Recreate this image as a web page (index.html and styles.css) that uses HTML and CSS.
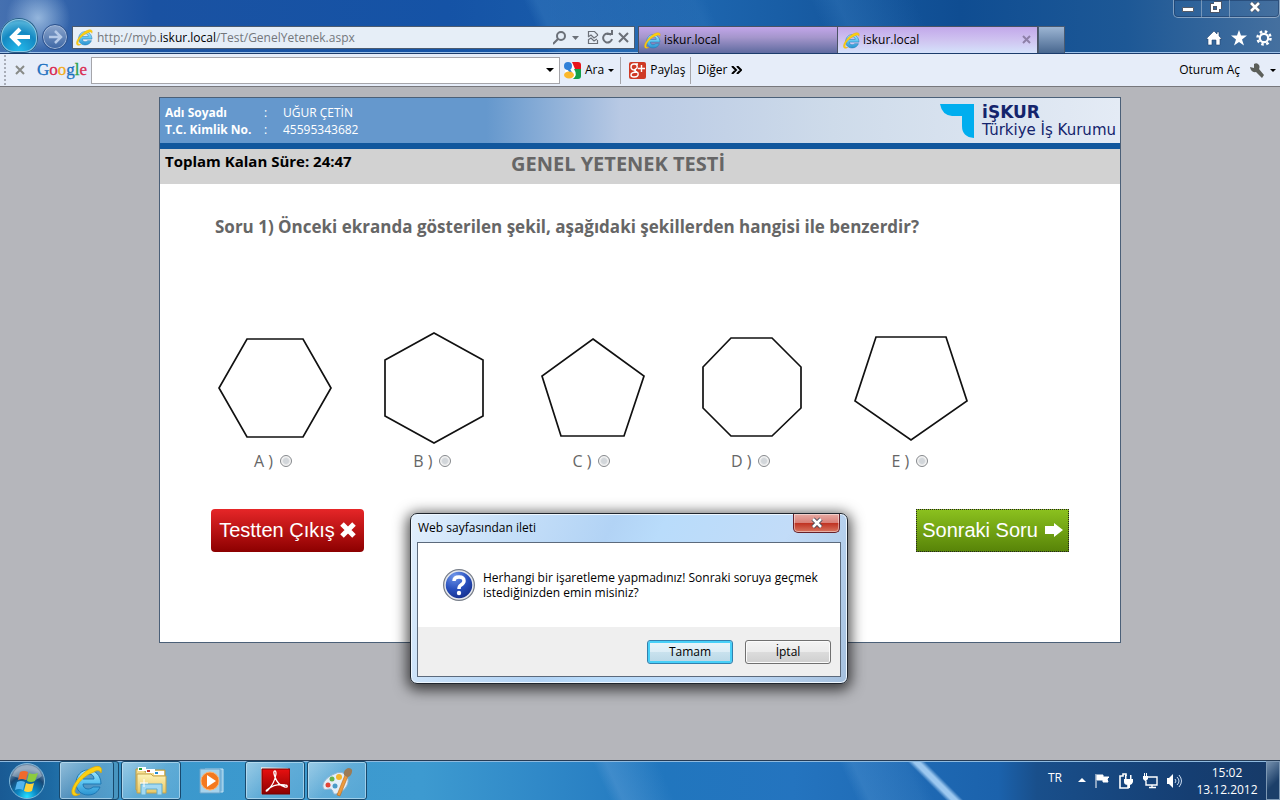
FILE: index.html
```html
<!DOCTYPE html>
<html lang="tr">
<head>
<meta charset="utf-8">
<title>Genel Yetenek Testi</title>
<link rel="stylesheet" href="styles.css">
</head>
<body>
<svg width="0" height="0" class="defs" aria-hidden="true">
  <defs>
    <linearGradient id="ieBlue" x1="0" y1="0" x2="0" y2="1"><stop offset="0" stop-color="#a5e6fc"/><stop offset=".5" stop-color="#5cc3f0"/><stop offset="1" stop-color="#2b93d0"/></linearGradient>
    <linearGradient id="folder" x1="0" y1="0" x2="0" y2="1"><stop offset="0" stop-color="#fdf3b8"/><stop offset="1" stop-color="#e8c865"/></linearGradient>
    <linearGradient id="adobe" x1="0" y1="0" x2="0" y2="1"><stop offset="0" stop-color="#e81010"/><stop offset="1" stop-color="#8c0000"/></linearGradient>
    <radialGradient id="orb" cx=".5" cy=".95" r=".8"><stop offset="0" stop-color="#25e0ff"/><stop offset=".35" stop-color="#0c87c4"/><stop offset=".75" stop-color="#164775"/><stop offset="1" stop-color="#6f8ba8"/></radialGradient>
    <radialGradient id="question" cx=".35" cy=".2" r=".9"><stop offset="0" stop-color="#6f96ea"/><stop offset=".5" stop-color="#2850be"/><stop offset="1" stop-color="#10257f"/></radialGradient>
    <symbol id="ie" viewBox="0 0 32 32">
      <path d="M29 22c-2 5-6 8-12 8C10 30 5 25 5 18S10 5 17 5s13 5 13 14H12c0 3 2 5 5 5 2 0 4-1 5-2zM12 14h11c0-3-2-5-5-5-4 0-6 2-6 5z" fill="url(#ieBlue)" stroke="#1e78b4"/>
      <path d="M9 29C4 32 0 31 1 25 3 17 13 5 23 2c6-2 9 1 7 6-1-3-4-3-7-1C14 10 6 18 4 25c-1 3 2 5 5 4z" fill="#fcd012" stroke="#e0a800" stroke-width=".7"/>
    </symbol>
  </defs>
</svg>

<header class="chrome">
  <div class="window-buttons">
    <button aria-label="Simge durumuna küçült"><svg width="14" height="14" viewBox="0 0 14 14"><path d="M1.500 7.500h11v4h-11z" fill="#fff" stroke="#555b68"/></svg></button>
    <button aria-label="Önceki boyut"><svg width="14" height="14" viewBox="0 0 14 14"><g fill="none" stroke="#4d5668" stroke-width="4"><path d="M5 3h6v6M3 5h6v6H3z"/></g><g fill="none" stroke="#fff" stroke-width="2"><path d="M5 3h6v6M3 5h6v6H3z"/></g></svg></button>
    <button class="wide" aria-label="Kapat"><svg width="14" height="14" viewBox="0 0 14 14"><path d="M3 3l8 8M11 3l-8 8" stroke="#4d5668" stroke-width="4.500"/><path d="M3 3l8 8M11 3l-8 8" stroke="#fff" stroke-width="2.600"/></svg></button>
  </div>
  <nav class="nav">
    <button class="back" aria-label="Geri"><svg width="38" height="35" viewBox="0 0 38 35"><path d="M11 19h19M20 11l-8 8 8 8" fill="none" stroke="#fff" stroke-width="4"/></svg></button>
    <button class="forward" aria-label="İleri"><svg width="24" height="24" viewBox="0 0 24 24"><path d="M6 12h12M12 6l6 6-6 6" fill="none" stroke="#b5cae8" stroke-width="2.500"/></svg></button>
    <div class="address">
      <svg width="17" height="17"><use href="#ie"/></svg>
      <span class="url">http://myb.<b>iskur.local</b>/Test/GenelYetenek.aspx</span>
      <svg width="78" height="18" viewBox="0 0 78 18" fill="none" stroke="#6b7078" stroke-width="2"><circle cx="8" cy="7" r="4"/><path d="M5 10l-5 5"/><path d="M19 7h7l-3.500 4z" fill="#6b7078" stroke="none"/><path d="M35.500 7V2.500h6l3 3V7M35.500 11v3.500h9V11" stroke-width="1.200"/><path d="M35 8l3-2 3 3 3-2M35 11l3-2 3 3 3-2" stroke-width="1.200"/><path d="M58 6a4.500 4.500 0 1 0 1 4M54 5h5V1"/><path d="M66 4l9 9M75 4l-9 9"/></svg>
    </div>
    <div class="tab"><svg width="17" height="17"><use href="#ie"/></svg><span>iskur.local</span></div>
    <div class="tab active"><svg width="17" height="17"><use href="#ie"/></svg><span>iskur.local</span><button aria-label="Sekmeyi kapat"><svg width="10" height="10" viewBox="0 0 10 10"><path d="M1 1l7 7M8 1L1 8" stroke="#8e80a8" stroke-width="2"/></svg></button></div>
    <button class="new-tab" aria-label="Yeni sekme"></button>
    <div class="tools">
      <button aria-label="Giriş"><svg width="16" height="16" viewBox="0 0 16 16"><path d="M8 1L0 9h2v6h4v-5h4v5h4V9h2l-3-3V2h-2v2z" fill="#fff" stroke="#24456f" stroke-width=".6"/></svg></button>
      <button aria-label="Sık kullanılanlar"><svg width="16" height="16" viewBox="0 0 16 16"><path d="M8 0l2 5.500h6l-5 4 2 6L8 12l-5 3.500 2-6-5-4h6z" fill="#fff"/></svg></button>
      <button aria-label="Araçlar"><svg width="16" height="16" viewBox="0 0 16 16"><circle cx="8" cy="8" r="6.500" fill="none" stroke="#fff" stroke-width="2.500" stroke-dasharray="2.550 2.550"/><circle cx="8" cy="8" r="4.200" fill="none" stroke="#fff" stroke-width="2.200"/></svg></button>
    </div>
  </nav>
</header>

<div class="toolbar">
  <i class="grip"></i>
  <button class="bar-close" aria-label="Araç çubuğunu kapat"><svg width="10" height="10" viewBox="0 0 10 10"><path d="M1 1l8 8M9 1L1 9" stroke="#888b88" stroke-width="2"/></svg></button>
  <span class="google"><i class="c1">G</i><i class="c2">o</i><i class="c3">o</i><i class="c1">g</i><i class="c4">l</i><i class="c2">e</i></span>
  <div class="search"><input type="text" aria-label="Google araması"><svg width="8" height="4"><path d="M0 0h8L4 4z"/></svg></div>
  <button class="ara"><svg width="17" height="17" viewBox="0 0 17 17"><rect x="1" y="1" width="15" height="15" fill="#fff"/><path d="M8 0h6q3 0 3 3v4H11z" fill="#e8141c"/><path d="M10 7h7v7q0 3-3 3H9q5-4 1-10z" fill="#12a04a"/><circle cx="4" cy="4" r="4" fill="#2f80d8"/><path d="M3 7l3 4 3 1-3-5z" fill="#2f80d8"/><ellipse cx="5" cy="13" rx="5" ry="3.500" fill="#fbb82c"/></svg><span>Ara</span><svg width="6" height="3"><path d="M0 0h6L3 3z"/></svg></button>
  <button class="share"><svg width="17" height="17" viewBox="0 0 17 17"><rect width="17" height="17" rx="2" fill="#cf3a26"/><path d="M9 2H5Q2 2 2 5t4 3h1M5 2q4 0 3 4L5 8l4 3q1 4-4 4-3 0-3-2 0-3 6-3M12.500 3v7M9 6.500h7" fill="none" stroke="#fff" stroke-width="1.400"/></svg><span>Paylaş</span></button>
  <button class="more"><span>Diğer</span><svg width="11" height="8" viewBox="0 0 11 8"><path d="M1 0l4 4-4 4M6 0l4 4-4 4" fill="none" stroke="#000" stroke-width="2"/></svg></button>
  <button class="login"><span>Oturum Aç</span><svg width="15" height="15" viewBox="0 0 15 15"><path d="M1 4l4 1V1q3-2 5 1 1 2 0 4l5 6-2 3-6-6Q2 10 1 4z" fill="#5c5f5a"/></svg><svg width="6" height="3"><path d="M0 0h6L3 3z"/></svg></button>
</div>

<main class="page">
  <section class="panel">
    <div class="banner">
      <dl class="identity">
        <dt>Adı Soyadı</dt><dd>:</dd><dd>UĞUR ÇETİN</dd>
        <dt>T.C. Kimlik No.</dt><dd>:</dd><dd>45595343682</dd>
      </dl>
      <div class="brand">
        <svg width="34" height="34" viewBox="0 0 34 34"><path d="M0 0h34v34q-12-1-12-12V12H12Q2 11 0 0z" fill="#00aeef"/></svg>
        <div><strong>iŞKUR</strong><span>Türkiye İş Kurumu</span></div>
      </div>
    </div>
    <div class="status"><p>Toplam Kalan Süre: 24:47</p><h1>GENEL YETENEK TESTİ</h1></div>
    <form class="quiz">
      <h2>Soru 1) Önceki ekranda gösterilen şekil, aşağıdaki şekillerden hangisi ile benzerdir?</h2>
      <div class="options">
        <label><svg width="120" height="120"><path d="M32 9h56l28 49-28 49H32L4 58z"/></svg><span>A ) <input type="radio" name="answer"></span></label>
        <label><svg width="120" height="120"><path d="M60 3l49 27v56l-49 27-49-27V30z"/></svg><span>B ) <input type="radio" name="answer"></span></label>
        <label><svg width="120" height="120"><path d="M60 9l51 37-20 60H28L9 46z"/></svg><span>C ) <input type="radio" name="answer"></span></label>
        <label><svg width="120" height="120"><path d="M39 8h41l29 29v41l-29 28H39L11 78V37z"/></svg><span>D ) <input type="radio" name="answer"></span></label>
        <label><svg width="120" height="120"><path d="M25 7h70l21 64-56 39L4 71z"/></svg><span>E ) <input type="radio" name="answer"></span></label>
      </div>
      <div class="actions">
        <button type="button" class="exit"><span>Testten Çıkış</span><svg width="16" height="16" viewBox="0 0 16 16"><path d="M2 2l12 12M14 2L2 14" stroke="#fff" stroke-width="5"/></svg></button>
        <button type="button" class="next"><span>Sonraki Soru</span><svg width="18" height="14" viewBox="0 0 18 14"><path d="M0 3h9V0l9 7-9 7v-3H0z" fill="#fff"/></svg></button>
      </div>
    </form>
  </section>
</main>

<div class="dialog" role="dialog" aria-labelledby="dialog-title">
  <div class="dialog-bar"><span id="dialog-title">Web sayfasından ileti</span>
    <button class="dialog-close" aria-label="Kapat"><svg width="14" height="12" viewBox="0 0 14 12"><path d="M3 2l8 8M11 2l-8 8" stroke="#4a4a58" stroke-width="4.500"/><path d="M3 2l8 8M11 2l-8 8" stroke="#fff" stroke-width="2.500"/></svg></button></div>
  <div class="dialog-body">
    <div class="message">
      <svg width="32" height="32" viewBox="0 0 32 32"><circle cx="16" cy="16" r="15" fill="url(#question)" stroke="#777d88" stroke-width="2"/><circle cx="16" cy="16" r="14" fill="none" stroke="#e5e8ee" stroke-width="1.500"/><path d="M11 12q0-4 5-4t5 4q0 2-3 4-2 1-2 4" fill="none" stroke="#fff" stroke-width="3.500"/><circle cx="16" cy="24" r="2.200" fill="#fff"/></svg>
      <p>Herhangi bir işaretleme yapmadınız! Sonraki soruya geçmek istediğinizden emin misiniz?</p>
    </div>
    <div class="dialog-actions"><button class="default">Tamam</button><button>İptal</button></div>
  </div>
</div>

<footer class="taskbar">
  <button class="start" aria-label="Başlat"><svg width="38" height="38" viewBox="0 0 38 38"><circle cx="19" cy="19" r="17.500" fill="url(#orb)" stroke="#7fb8da"/><path d="M4 14Q8 3 19 3t15 11q-7 6-15 4T4 14z" fill="#fff" opacity=".3"/><path d="M12 10q4-2 8 0l-2 8q-4-2-8 0z" fill="#ef6a2c"/><path d="M21 11q4 2 9 0l-3 8q-4 2-8 0z" fill="#8ccb3f"/><path d="M9 20q4-2 8 0l-2 8q-4-2-8 0z" fill="#54b4ee"/><path d="M18 21q4 2 8 0l-2 8q-4 2-8 0z" fill="#ffd23a"/></svg></button>
  <button class="task stacked" aria-label="Internet Explorer"><svg width="32" height="32"><use href="#ie"/></svg></button>
  <button class="task" aria-label="Windows Gezgini"><svg width="34" height="32" viewBox="0 0 34 32"><path d="M2 4h9v3h7V5h13v20H2z" fill="#f3dc8c" stroke="#b99843"/><path d="M4 2h8v4H4zM12 4h9v4h-9zM20 6h10v4H20z" fill="#fff"/><path d="M5 3h3v2H5z" fill="#1f9d33"/><path d="M13 5h3v2h-3z" fill="#bf3327"/><path d="M21 7h3v2h-3z" fill="#238ed4"/><path d="M3 9h14l2 2h13v17H3z" fill="url(#folder)" stroke="#c4a34c"/><path d="M7 30V19h21v11h-5v-6H12v6z" fill="#a3d9f2" stroke="#5cabd0"/><path d="M10 14v8M6 18h8" stroke="#fff"/></svg></button>
  <button class="task idle" aria-label="Windows Media Player"><svg width="30" height="28" viewBox="0 0 30 28"><path d="M7 2h18v23H7z" fill="#7fbbe0" stroke="#c3e2f3"/><path d="M2 2h20v24H2z" fill="#a7d3ec" stroke="#6ba4ca"/><circle cx="12" cy="14" r="9" fill="#f4791f" stroke="#ffb26b"/><path d="M9 8l9 6-9 6z" fill="#fff"/></svg></button>
  <button class="task" aria-label="Adobe Reader"><svg width="30" height="30" viewBox="0 0 30 30"><path d="M1 1l27 1v26H1z" fill="#dcdfe2"/><path d="M2 3h28v25H2z" fill="url(#adobe)" stroke="#700"/><path d="M15 5c-2 0-1 3 0 6 2 6 6 9 10 10 3 1 3-2 0-2-6-1-13 1-17 4-3 2-2 3 0 1 4-4 7-10 8-16 0-2 0-3-1-3z" fill="none" stroke="#fff" stroke-width="1.300"/></svg></button>
  <button class="task" aria-label="Paint"><svg width="32" height="32" viewBox="0 0 32 32"><path d="M11 10q12-7 16 4c1 6-4 13-12 15-4 1-2-5-6-5-3 0-6 2-7-2-1-5 5-10 9-12z" fill="#e4eff8" stroke="#94b6d2"/><circle cx="7" cy="20" r="2.500" fill="#e34336"/><circle cx="11" cy="14" r="2.500" fill="#64b34c"/><circle cx="18" cy="12" r="3" fill="#f4b52a"/><circle cx="14" cy="21" r="2.500" fill="#4a9bc8"/><path d="M16 30l8-20 3 1-8 20z" fill="#ec9a3e" stroke="#b86a1f" stroke-width=".6"/><path d="M23 10q-1-5 4-7 5 0 4 4-1 5-5 5z" fill="#9b7b56"/></svg></button>
  <div class="tray">
    <span class="lang">TR</span>
    <svg width="8" height="5"><path d="M0 4h8L4 0z" fill="#fff"/></svg>
    <svg width="16" height="16" viewBox="0 0 16 16"><path d="M2 1v14M3 2h6v5H3zM9 4h6l-2 2 1 3H9z" fill="#fff" stroke="#fff"/></svg>
    <svg width="16" height="16" viewBox="0 0 16 16"><path d="M8 3V1H5v2H2v12h8v-3" fill="none" stroke="#fff" stroke-width="1.600"/><path d="M6 6h9v3q-1 3-3 3v3h-2v-3Q6 12 6 9zM7 2h1.500v4H7zM12 2h1.500v4H12z" fill="#fff"/></svg>
    <svg width="16" height="16" viewBox="0 0 16 16"><path d="M6 4h9v8H4V8M7 14.500h7M10 12v2" fill="none" stroke="#fff" stroke-width="1.400"/><path d="M1 3h5v3L4 8H3L1 6zM2 0h1v3H2zM4 0h1v3H4z" fill="#fff"/></svg>
    <svg width="16" height="16" viewBox="0 0 16 16"><path d="M1 5h2l4-4v14l-4-4H1z" fill="#fff"/><path d="M9 6q2 2 0 4M11 4q4 4 0 8M13 2q5 6 0 12" fill="none" stroke="#cbdcf0"/></svg>
    <div class="clock"><span>15:02</span><span>13.12.2012</span></div>
  </div>
  <button class="show-desktop" aria-label="Masaüstünü göster"></button>
</footer>
</body>
</html>
```
FILE: styles.css
```css
* { box-sizing: border-box; }
body {
  margin: 0;
  min-height: 100vh;
  display: flex;
  flex-direction: column;
  background: #b5b6bb;
  font: 12px/16px "Open Sans", "Noto Sans", sans-serif;
  color: #000;
}
button { padding: 0; border: 0; background: none; font: inherit; color: inherit; }
p, h1, h2, dl, dd { margin: 0; }
svg { flex: none; }
.defs { position: absolute; }

.chrome {
  display: flex;
  flex-direction: column;
  border-bottom: 1px solid #1c3c6c;
  box-shadow: inset 0 -1px #9fc3ea;
  background:
    radial-gradient(circle at 38px 18px, #bcd8f2b0 0, #bcd8f200 32px),
    linear-gradient(65deg, transparent 42%, #3c80c266 43%, #3c80c233 55%, transparent 56%, transparent 64%, #3c80c255 66%, transparent 72%),
    linear-gradient(90deg, #4570b0 0, #1a52a2 12%, #1553a6 35%, #1d65ae 55%, #0f4d92 75%, #1d5896 88%, #45709f 100%);
}
.window-buttons {
  align-self: flex-end;
  display: flex;
  height: 18px;
  width: 107px;
  border: 1px solid #ffffff66;
  border-top: 0;
  border-radius: 0 0 5px 5px;
  box-shadow: inset 0 0 0 1px #17345d80;
}
.window-buttons button { width: 28px; border-right: 1px solid #ffffff55; }
.window-buttons .wide { flex: 1; border: 0; }
.nav { display: flex; align-items: flex-end; height: 35px; }
.back {
  width: 38px;
  height: 35px;
  overflow: hidden;
  border-radius: 19px 19px 14px 14px;
  background: radial-gradient(circle at 50% 95%, #25bbec, #1489c3 50%, #4eb0d8 75%, #2b6795);
  box-shadow: inset 0 0 0 1px #295b88, inset 0 0 0 2px #8ec9e4;
}
.forward {
  display: grid;
  place-items: center;
  width: 26px;
  height: 26px;
  margin: 0 4px 3px;
  border: 1px solid #29508c;
  border-radius: 50%;
  background: linear-gradient(#8ca6cd, #3c66a4);
  box-shadow: inset 0 0 0 1px #a2b8d8;
}
.address {
  flex: 0 1 563px;
  display: flex;
  align-items: center;
  gap: 4px;
  height: 23px;
  margin-bottom: 4px;
  padding: 0 3px;
  border: 1px solid #4b5b70;
  background: #e6eef7;
}
.url { flex: 1; color: #73777c; white-space: nowrap; }
.url b { font-weight: 400; color: #000; }
.tab {
  flex: 0 1 200px;
  display: flex;
  align-items: center;
  gap: 3px;
  height: 27px;
  padding: 0 5px;
  border: 1px solid #4a5364;
  border-bottom: 0;
  background: linear-gradient(#c2a6ea, #a596cc 40%, #5f6ba0);
}
.address + .tab { margin-left: 3px; }
.tab.active { border-left: 0; background: linear-gradient(#c2a8ea, #cfc3f0 50%, #d5e2fb); }
.tab span { flex: 1; }
.tab button { line-height: 0; }
.new-tab { width: 27px; height: 27px; border: 1px solid #4a5a70; border-bottom: 0; background: linear-gradient(#9cb5d3, #48678f); }
.tools { display: flex; gap: 9px; margin: 0 8px 7px auto; }
.tools button { line-height: 0; }

.toolbar {
  display: flex;
  align-items: center;
  height: 33px;
  border-bottom: 1px solid #77777c;
  background: #e6edf9;
  white-space: nowrap;
}
.toolbar button { display: flex; align-items: center; }
.grip { width: 2px; height: 30px; margin-left: 4px; background: repeating-linear-gradient(#a8adb8 0 2px, transparent 2px 4px); }
.bar-close { margin: 0 12px 0 9px; }
.google { width: 54px; font: 17px/24px "Liberation Serif", serif; -webkit-text-stroke: 0.3px; }
.google i { font-style: normal; }
.c1 { color: #1b70c0; }
.c2 { color: #d92a50; }
.c3 { color: #f2ac20; }
.c4 { color: #2aa04b; }
.search { flex: 0 1 469px; display: flex; align-items: center; height: 27px; padding-right: 5px; border: 1px solid #a5a5aa; background: #fff; }
.search input { flex: 1; min-width: 0; height: 24px; border: 0; outline: 0; font: inherit; }
.ara { gap: 4px; height: 27px; padding: 0 6px 0 4px; border-right: 1px solid #a5a5aa; }
.share { gap: 4px; height: 27px; padding: 0 4px 0 8px; border-right: 1px solid #a5a5aa; }
.more { gap: 4px; margin-left: 7px; }
.login { gap: 9px; margin: 0 4px 0 auto; }
.login svg + svg { margin-left: -3px; }

.page { flex: 1; padding: 10px 16px 40px; }
.panel { max-width: 962px; min-height: 546px; margin: 0 auto; border: 1px solid #4b6078; background: #fff; }
.banner {
  display: flex;
  justify-content: space-between;
  align-items: center;
  height: 51px;
  padding: 0 4px 0 5px;
  border-bottom: 6px solid #11579d;
  background: linear-gradient(90deg, #6598cd 0, #6598cd 34%, #b8c9e4 48%, #cedbea 70%, #e4ebf5 100%);
}
.identity { display: grid; grid-template-columns: 99px 19px auto; color: #fff; line-height: 17px; }
.identity dt { font-weight: 700; }
.brand { display: flex; align-items: center; gap: 8px; color: #14246c; }
.brand div { display: flex; flex-direction: column; font-family: "DejaVu Sans", sans-serif; }
.brand strong { font-size: 17px; line-height: 18px; }
.brand span { font-size: 15px; line-height: 18px; }
.status { display: grid; grid-template-columns: 346px 1fr; height: 35px; padding: 0 5px; background: #d2d2d2; }
.status p { font-size: 15px; font-weight: 700; line-height: 24px; }
.status h1 { font-size: 20px; line-height: 30px; color: #666; }
.quiz { padding: 30px 50px 0 35px; }
.quiz h2 { padding-left: 20px; font-size: 17px; line-height: 26px; color: #666; }
.options { display: grid; grid-template-columns: repeat(5, 1fr); max-width: 796px; margin-top: 90px; }
.options label { display: flex; flex-direction: column; align-items: center; }
.options path { fill: none; stroke: #111; stroke-width: 1.700; }
.options span { display: flex; align-items: center; gap: 7px; padding-right: 3px; font-size: 16px; line-height: 22px; color: #666; }
.options input {
  appearance: none;
  width: 12px;
  height: 12px;
  margin: 0;
  border: 1px solid #85888c;
  border-radius: 50%;
  background: radial-gradient(#d2d6da 35%, #f4f4f4 60%);
}
.actions { display: flex; justify-content: space-between; margin: 37px 1px 0 16px; }
.actions button {
  display: flex;
  align-items: center;
  justify-content: center;
  width: 153px;
  height: 43px;
  padding-bottom: 2px;
  font: 20px/24px "Liberation Sans", sans-serif;
  color: #fff;
  white-space: nowrap;
}
.exit { gap: 5px; border-radius: 4px; background: linear-gradient(#e62628, #8c0000); }
.next { gap: 7px; background: linear-gradient(#8cc21f, #578308); outline: 1px dotted #222; outline-offset: -1px; }

.dialog {
  position: absolute;
  left: 410px;
  top: 513px;
  width: 438px;
  padding: 0 7px 7px;
  border: 1px solid #20262e;
  border-radius: 7px;
  background: linear-gradient(115deg, #e2effc 0, #c4def8 22%, #b2d3f5 40%, #b9dcfb 50%, #c2dcf8 75%, #a5c0de 100%);
  box-shadow: inset 0 0 0 1px #eef7ff, 0 3px 14px 3px #000000b0;
}
.dialog-bar { display: flex; justify-content: space-between; height: 28px; line-height: 27px; }
.dialog-close { width: 47px; height: 19px; border: 1px solid #66202a; border-top: 0; border-radius: 0 0 5px 5px; background: linear-gradient(#e8aba4, #d98078 48%, #bf3020 50%, #d87560); line-height: 0; box-shadow: inset 0 0 0 1px #ffffff70; }
.dialog-body { border: 1px solid #5c6a7c; background: #fff; margin: 0 -1px -1px; }
.message { display: flex; align-items: center; gap: 8px; height: 84px; padding: 0 12px 0 25px; }
.message p { line-height: 15px; }
.dialog-actions { display: flex; justify-content: flex-end; gap: 12px; height: 49px; padding: 13px 9px; background: #efefef; }
.dialog-actions button { width: 86px; height: 24px; border: 1px solid #707070; border-radius: 3px; background: linear-gradient(#f3f3f3, #ebebeb 50%, #dcdcdc 50%, #cfcfcf); box-shadow: inset 0 0 0 1px #fbfbfb; }
.dialog-actions .default { border-color: #3280ae; background: linear-gradient(#eaf5fa, #dcedf6 50%, #c9e2ee 50%, #b9d7e6); box-shadow: inset 0 0 0 2px #48d0f8; }

.taskbar {
  display: flex;
  align-items: stretch;
  height: 40px;
  border-top: 1px solid #253b55;
  box-shadow: inset 0 1px #8fbadf;
  background:
    linear-gradient(45deg, transparent 41%, #9cc8f0 47%, #9cc8f0 53%, transparent 59%) 905px 0 / 60px 100% no-repeat,
    linear-gradient(65deg, transparent 47%, #5799d480 48%, transparent 52%, transparent 66%, #5799d455 67%, #5799d422 71%, transparent 72%),
    linear-gradient(90deg, #195a94 0, #1d6aa3 4%, #3b98cc 10%, #3d9ad0 33%, #3089c8 42%, #2176be 52%, #2474bf 62%, #1b62ac 78%, #194f8b 81%, #153e72 93%, #173a67 100%);
}
.start { width: 54px; line-height: 0; margin-right: 5px; }
.task {
  display: grid;
  place-items: center;
  width: 60px;
  margin-right: 2px;
  border: 1px solid #18496d;
  border-radius: 3px;
  background: linear-gradient(135deg, #c5e2f1b0, #ffffff30 50%, #ffffff20);
  box-shadow: inset 0 0 0 1px #c9e6f5a0;
}
.task.stacked { padding-right: 5px; box-shadow: inset -4px 0 #4795c0, inset -5px 0 #18496d, inset 0 0 0 1px #c9e6f5a0; }
.task.idle { border-color: transparent; background: none; box-shadow: none; }
.tray { display: flex; align-items: center; gap: 8px; margin-left: auto; color: #fff; }
.lang { margin: -6px 8px 0 0; }
.clock { display: flex; flex-direction: column; align-items: center; width: 66px; margin: 0 6px 0 4px; line-height: 17px; }
.show-desktop { width: 14px; border: 1px solid #7d98b4; background: linear-gradient(135deg, #7590ad, #1c3f69 60%); }
```
